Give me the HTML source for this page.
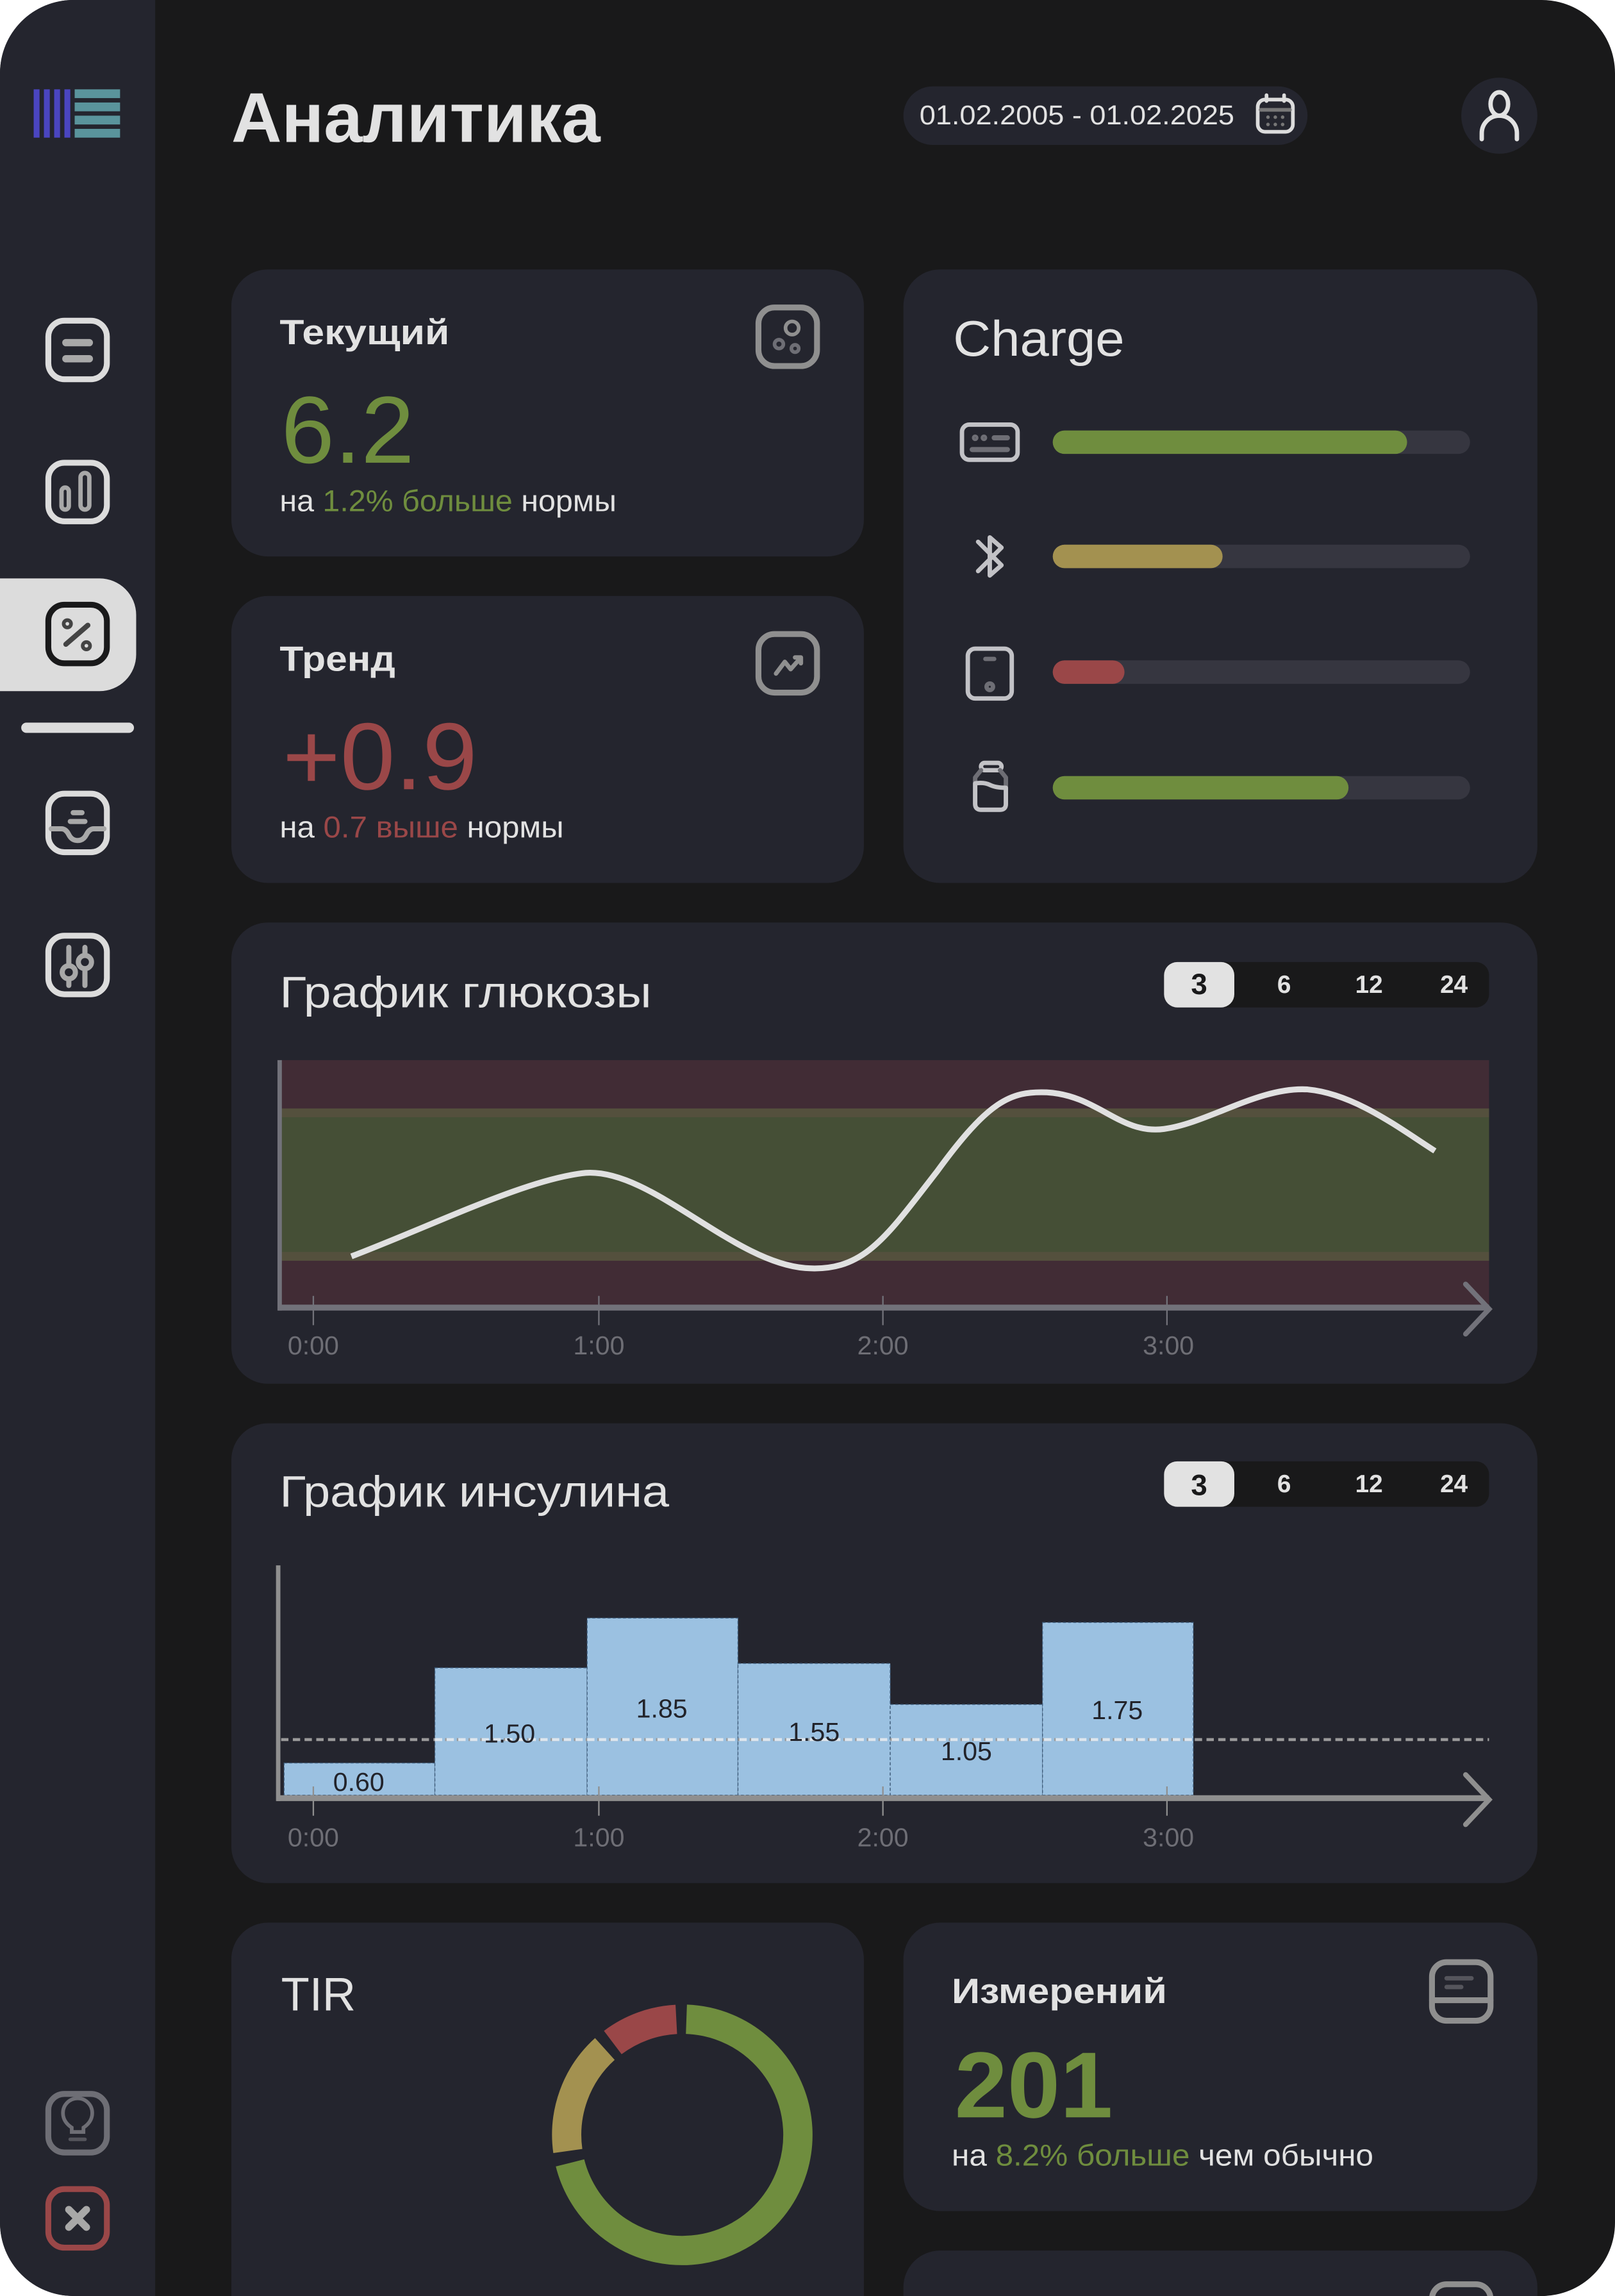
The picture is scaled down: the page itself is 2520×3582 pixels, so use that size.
<!DOCTYPE html>
<html><head><meta charset="utf-8"><style>
html,body{margin:0;padding:0;background:#fff;}
svg{display:block;}
text{font-family:"Liberation Sans","Noto Sans CJK SC",sans-serif;}
</style></head><body>
<svg width="2520" height="3582" viewBox="0 0 1103 1568" preserveAspectRatio="none" xmlns="http://www.w3.org/2000/svg">
<defs><clipPath id="frame"><rect x="0" y="0" width="1103" height="1568" rx="50"/></clipPath></defs>
<rect width="1103" height="1568" fill="#fff"/>
<g clip-path="url(#frame)">
<rect width="1103" height="1568" fill="#19191a"/>
<rect width="106" height="1568" fill="#24252e"/>

<!-- logo -->
<g fill="#4a45c0"><rect x="23" y="61" width="4" height="33"/><rect x="30" y="61" width="4" height="33"/><rect x="37" y="61" width="4" height="33"/><rect x="44" y="61" width="4" height="33"/></g>
<g fill="#5a949c"><rect x="51" y="61" width="31" height="6"/><rect x="51" y="70" width="31" height="6"/><rect x="51" y="79" width="31" height="6"/><rect x="51" y="88" width="31" height="6"/></g>

<!-- sidebar icons -->
<g fill="none" stroke-linecap="round">
<rect x="33" y="219" width="40" height="40" rx="11" stroke="#dcdcdc" stroke-width="4"/>
<line x1="45" y1="234" x2="61" y2="234" stroke="#a8a8a8" stroke-width="5"/>
<line x1="45" y1="245" x2="61" y2="245" stroke="#a8a8a8" stroke-width="5"/>

<rect x="33" y="316" width="40" height="40" rx="11" stroke="#dcdcdc" stroke-width="4"/>
<rect x="42" y="333" width="5" height="15" rx="2.5" stroke="#a8a8a8" stroke-width="3"/>
<rect x="55" y="323" width="6" height="25" rx="3" stroke="#a8a8a8" stroke-width="3"/>
</g>
<path d="M0,395 H68 A25,25 0 0 1 93,420 V447 A25,25 0 0 1 68,472 H0 Z" fill="#dcdcdc"/>
<g fill="none" stroke-linecap="round">
<rect x="33" y="413" width="40" height="40" rx="11" stroke="#19191a" stroke-width="4"/>
<line x1="45" y1="440" x2="60" y2="427" stroke="#444" stroke-width="3.5"/>
<circle cx="46" cy="426" r="2.5" stroke="#444" stroke-width="2.5"/>
<circle cx="59" cy="441" r="2.5" stroke="#444" stroke-width="2.5"/>
<line x1="18" y1="497" x2="88" y2="497" stroke="#dcdcdc" stroke-width="7"/>

<rect x="33" y="542" width="40" height="40" rx="11" stroke="#dcdcdc" stroke-width="4"/>
<path d="M35,566 H42 Q45,566 47,570 Q49,574 53,574 Q57,574 59,570 Q61,566 64,566 H71" stroke="#a8a8a8" stroke-width="3.5"/>
<line x1="50" y1="555" x2="56" y2="555" stroke="#a8a8a8" stroke-width="3.5"/>
<line x1="48" y1="561" x2="58" y2="561" stroke="#a8a8a8" stroke-width="3.5"/>

<rect x="33" y="639" width="40" height="40" rx="11" stroke="#dcdcdc" stroke-width="4"/>
<line x1="47" y1="647" x2="47" y2="673" stroke="#a8a8a8" stroke-width="3.5"/>
<line x1="58" y1="647" x2="58" y2="673" stroke="#a8a8a8" stroke-width="3.5"/>
<circle cx="47" cy="664" r="4.5" stroke="#a8a8a8" stroke-width="3.5" fill="#24252e"/>
<circle cx="58" cy="657" r="4.5" stroke="#a8a8a8" stroke-width="3.5" fill="#24252e"/>

<rect x="33" y="1430" width="40" height="40" rx="11" stroke="#6e6e75" stroke-width="4"/>
<path d="M49,1456 V1453 Q43,1449 43,1443 A10,10 0 0 1 63,1443 Q63,1449 57,1453 V1456 Z" stroke="#6e6e75" stroke-width="2.5"/>
<line x1="48" y1="1461" x2="58" y2="1461" stroke="#55555c" stroke-width="2.5"/>

<rect x="33" y="1495" width="40" height="40" rx="11" stroke="#9a4748" stroke-width="4"/>
<line x1="47" y1="1509" x2="59" y2="1521" stroke="#a8a8a8" stroke-width="5"/>
<line x1="59" y1="1509" x2="47" y2="1521" stroke="#a8a8a8" stroke-width="5"/>
</g>

<!-- header -->
<text x="158" y="97" font-size="48" font-weight="bold" fill="#e2e2e2" textLength="252" lengthAdjust="spacingAndGlyphs">Аналитика</text>
<rect x="617" y="59" width="276" height="40" rx="20" fill="#24252e"/>
<text x="628" y="85" font-size="18.5" fill="#e2e2e2" textLength="215" lengthAdjust="spacingAndGlyphs">01.02.2005 - 01.02.2025</text>
<g fill="none" stroke="#dcdcdc" stroke-width="2.5" stroke-linecap="round">
<rect x="859" y="68" width="24" height="22" rx="5"/>
<line x1="865" y1="65" x2="865" y2="69"/><line x1="877" y1="65" x2="877" y2="69"/>
<line x1="861" y1="75" x2="881" y2="75" stroke="#777"/>
</g>
<g fill="#777"><circle cx="866" cy="80" r="1.2"/><circle cx="871" cy="80" r="1.2"/><circle cx="876" cy="80" r="1.2"/><circle cx="866" cy="85" r="1.2"/><circle cx="871" cy="85" r="1.2"/><circle cx="876" cy="85" r="1.2"/></g>
<circle cx="1024" cy="79" r="26" fill="#24252e"/>
<g fill="none" stroke="#e2e2e2" stroke-width="3" stroke-linecap="round">
<ellipse cx="1024" cy="71" rx="6" ry="8"/>
<path d="M1012,95 V91 A12,12 0 0 1 1036,91 V95"/>
</g>

<!-- card current -->
<rect x="158" y="184" width="432" height="196" rx="25" fill="#24252e"/>
<text x="191" y="235" font-size="24" font-weight="bold" fill="#e2e2e2" textLength="116" lengthAdjust="spacingAndGlyphs">Текущий</text>
<rect x="518" y="210" width="40" height="40" rx="11" fill="none" stroke="#8f8f8f" stroke-width="4"/>
<g fill="none" stroke="#6e6e75" stroke-width="2.5"><circle cx="541" cy="224" r="4.5" stroke="#8f8f8f"/><circle cx="532" cy="235" r="3"/><circle cx="543" cy="238" r="2.5"/></g>
<text x="192" y="316" font-size="65" fill="#6f8d3e" textLength="91" lengthAdjust="spacingAndGlyphs">6.2</text>
<text x="191" y="349" font-size="20.5" fill="#e2e2e2" textLength="230" lengthAdjust="spacingAndGlyphs">на <tspan fill="#6f8d3e">1.2% больше</tspan> нормы</text>

<!-- card trend -->
<rect x="158" y="407" width="432" height="196" rx="25" fill="#24252e"/>
<text x="191" y="458" font-size="24" font-weight="bold" fill="#e2e2e2" textLength="79" lengthAdjust="spacingAndGlyphs">Тренд</text>
<rect x="518" y="433" width="40" height="40" rx="11" fill="none" stroke="#8f8f8f" stroke-width="4"/>
<path d="M530,460 L536,452 L540,457 L547,449 M543,449 H547 V453" fill="none" stroke="#8f8f8f" stroke-width="3" stroke-linecap="round" stroke-linejoin="round"/>
<text x="193" y="539" font-size="65" fill="#9a4748" textLength="133" lengthAdjust="spacingAndGlyphs">+0.9</text>
<text x="191" y="572" font-size="20.5" fill="#e2e2e2" textLength="194" lengthAdjust="spacingAndGlyphs">на <tspan fill="#9a4748">0.7 выше</tspan> нормы</text>

<!-- charge -->
<rect x="617" y="184" width="433" height="419" rx="25" fill="#24252e"/>
<text x="651" y="243" font-size="34" fill="#e2e2e2" textLength="117" lengthAdjust="spacingAndGlyphs">Charge</text>
<g stroke-linecap="round" stroke-width="16">
<line x1="727" y1="302" x2="996" y2="302" stroke="#363640"/><line x1="727" y1="302" x2="953" y2="302" stroke="#6f8d3e"/>
<line x1="727" y1="380" x2="996" y2="380" stroke="#363640"/><line x1="727" y1="380" x2="827" y2="380" stroke="#a39150"/>
<line x1="727" y1="459" x2="996" y2="459" stroke="#363640"/><line x1="727" y1="459" x2="760" y2="459" stroke="#9a4748"/>
<line x1="727" y1="538" x2="996" y2="538" stroke="#363640"/><line x1="727" y1="538" x2="913" y2="538" stroke="#6f8d3e"/>
</g>
<g fill="none" stroke="#c2c2c6" stroke-width="3" stroke-linecap="round" stroke-linejoin="round">
<rect x="657" y="290" width="38" height="24" rx="5"/>
<line x1="664" y1="307" x2="688" y2="307" stroke="#6e6e75" stroke-width="3.5"/>
<line x1="679" y1="299" x2="688" y2="299" stroke="#6e6e75" stroke-width="3.5"/>
<circle cx="666" cy="299" r="1" stroke="#6e6e75" stroke-width="2.5"/>
<circle cx="672" cy="299" r="1" stroke="#6e6e75" stroke-width="2.5"/>
<path d="M668,370 L684,386 L676,393 V367 L684,374 L668,390"/>
<rect x="661" y="443" width="30" height="34" rx="5"/>
<line x1="673" y1="450" x2="679" y2="450" stroke="#6e6e75"/>
<circle cx="676" cy="469" r="2.2" stroke="#6e6e75"/>
<rect x="670" y="521" width="14" height="5" rx="2.5"/>
<path d="M670,526 L666,531 V549 Q666,553 670,553 H683 Q687,553 687,549 V531 L683,526" stroke="#6e6e75"/>
<path d="M666,535 Q672,534 676,536 Q680,538 687,538 V549 Q687,553 683,553 H670 Q666,553 666,549 Z"/>
</g>

<!-- glucose card -->
<rect x="158" y="630" width="892" height="315" rx="25" fill="#24252e"/>
<text x="191" y="688" font-size="30" fill="#e2e2e2" textLength="254" lengthAdjust="spacingAndGlyphs">График глюкозы</text>
<rect x="795" y="657" width="222" height="31" rx="9" fill="#19191a"/>
<rect x="795" y="657" width="48" height="31" rx="9" fill="#e2e2e2"/>
<g font-size="17" font-weight="bold" text-anchor="middle">
<text x="819" y="679" fill="#19191a" font-size="20">3</text>
<text x="877" y="678" fill="#e2e2e2">6</text><text x="935" y="678" fill="#e2e2e2">12</text><text x="993" y="678" fill="#e2e2e2">24</text></g>
<rect x="192" y="724" width="825" height="169" fill="#412c35"/>
<rect x="192" y="757" width="825" height="104" fill="#54503d"/>
<rect x="192" y="763" width="825" height="92" fill="#454f36"/>
<path d="M240,858 C300,835 360,805 400,801 C445,798 500,862 550,866 C590,869 605,845 640,800 C675,752 690,745 715,746 C750,748 765,775 795,771 C825,767 860,742 893,744 C925,747 955,770 980,786" fill="none" stroke="#e0e0e0" stroke-width="4"/>
<g stroke="#72727a" fill="none">
<line x1="191" y1="724" x2="191" y2="895" stroke-width="3"/>
<line x1="190" y1="893" x2="1017" y2="893" stroke-width="4"/>
<path d="M1001,877 L1017,894 L1001,911" stroke-width="3.5" stroke-linecap="round"/>
<g stroke-width="1"><line x1="214" y1="885" x2="214" y2="905"/><line x1="409" y1="885" x2="409" y2="905"/><line x1="603" y1="885" x2="603" y2="905"/><line x1="797" y1="885" x2="797" y2="905"/></g>
</g>
<g font-size="18" fill="#6e6e75" text-anchor="middle"><text x="214" y="925">0:00</text><text x="409" y="925">1:00</text><text x="603" y="925">2:00</text><text x="798" y="925">3:00</text></g>

<!-- insulin card -->
<rect x="158" y="972" width="892" height="314" rx="25" fill="#24252e"/>
<text x="191" y="1029" font-size="30" fill="#e2e2e2" textLength="266" lengthAdjust="spacingAndGlyphs">График инсулина</text>
<rect x="795" y="998" width="222" height="31" rx="9" fill="#19191a"/>
<rect x="795" y="998" width="48" height="31" rx="9" fill="#e2e2e2"/>
<g font-size="17" font-weight="bold" text-anchor="middle">
<text x="819" y="1021" fill="#19191a" font-size="20">3</text>
<text x="877" y="1019" fill="#e2e2e2">6</text><text x="935" y="1019" fill="#e2e2e2">12</text><text x="993" y="1019" fill="#e2e2e2">24</text></g>
<g fill="#9bc1e1" stroke="#3d5a78" stroke-width="0.6" stroke-dasharray="2 1.5">
<rect x="194" y="1204" width="103" height="22"/>
<rect x="297" y="1139" width="104" height="87"/>
<rect x="401" y="1105" width="103" height="121"/>
<rect x="504" y="1136" width="104" height="90"/>
<rect x="608" y="1164" width="104" height="62"/>
<rect x="712" y="1108" width="103" height="118"/>
</g>
<line x1="192" y1="1188" x2="1017" y2="1188" stroke="#9a9a9a" stroke-width="2" stroke-dasharray="5 3"/>
<line x1="297" y1="1188" x2="815" y2="1188" stroke="#dde6ee" stroke-width="2" stroke-dasharray="5 3"/>
<g font-size="18" fill="#22232a" text-anchor="middle"><text x="245" y="1223">0.60</text><text x="348" y="1190">1.50</text><text x="452" y="1173">1.85</text><text x="556" y="1189">1.55</text><text x="660" y="1202">1.05</text><text x="763" y="1174">1.75</text></g>
<g stroke="#8f8f8f" fill="none">
<line x1="190" y1="1069" x2="190" y2="1230" stroke-width="3"/>
<line x1="189" y1="1228" x2="1017" y2="1228" stroke-width="4"/>
<path d="M1001,1212 L1017,1229 L1001,1246" stroke-width="3.5" stroke-linecap="round"/>
<g stroke-width="1"><line x1="214" y1="1220" x2="214" y2="1240"/><line x1="409" y1="1220" x2="409" y2="1240"/><line x1="603" y1="1220" x2="603" y2="1240"/><line x1="797" y1="1220" x2="797" y2="1240"/></g>
</g>
<g font-size="18" fill="#6e6e75" text-anchor="middle"><text x="214" y="1261">0:00</text><text x="409" y="1261">1:00</text><text x="603" y="1261">2:00</text><text x="798" y="1261">3:00</text></g>

<!-- TIR -->
<rect x="158" y="1313" width="432" height="300" rx="25" fill="#24252e"/>
<text x="192" y="1373" font-size="32" fill="#e2e2e2" textLength="51" lengthAdjust="spacingAndGlyphs">TIR</text>
<g fill="none" stroke-width="20">
<path d="M468.8,1379 A79,79 0 1 1 389.3,1477.1" stroke="#6f8d3e"/>
<path d="M387.8,1469 A79,79 0 0 1 413.1,1399.3" stroke="#a39150"/>
<path d="M418.5,1394.9 A79,79 0 0 1 461.9,1379.1" stroke="#9a4748"/>
</g>

<!-- Измерений -->
<rect x="617" y="1313" width="433" height="197" rx="25" fill="#24252e"/>
<text x="650" y="1368" font-size="24" font-weight="bold" fill="#e2e2e2" textLength="147" lengthAdjust="spacingAndGlyphs">Измерений</text>
<g fill="none" stroke-linecap="round">
<rect x="978" y="1340" width="40" height="40" rx="10" stroke="#8f8f8f" stroke-width="4"/>
<line x1="978" y1="1366" x2="1018" y2="1366" stroke="#8f8f8f" stroke-width="4"/>
<line x1="988" y1="1351" x2="1005" y2="1351" stroke="#55555c" stroke-width="3"/>
<line x1="988" y1="1357" x2="998" y2="1357" stroke="#55555c" stroke-width="3"/>
</g>
<text x="652" y="1446" font-size="64" font-weight="bold" fill="#6f8d3e" textLength="108" lengthAdjust="spacingAndGlyphs">201</text>
<text x="650" y="1479" font-size="20.5" fill="#e2e2e2" textLength="288" lengthAdjust="spacingAndGlyphs">на <tspan fill="#6f8d3e">8.2% больше</tspan> чем обычно</text>

<rect x="617" y="1537" width="433" height="100" rx="25" fill="#24252e"/>
<rect x="978" y="1560" width="40" height="40" rx="10" fill="none" stroke="#8f8f8f" stroke-width="4"/>
</g>
</svg>
</body></html>
